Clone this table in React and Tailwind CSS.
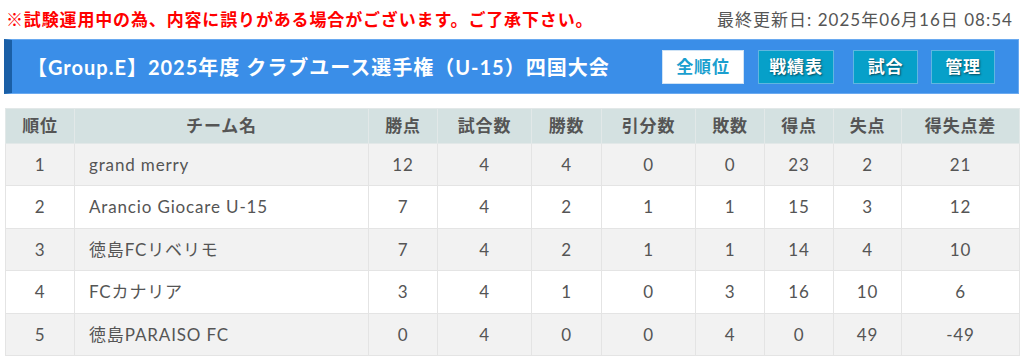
import React from 'react';

// ── Data ──────────────────────────────────────────────────────────────────────

const COLUMNS = [
    { label: '順位', width: 69 },
    { label: 'チーム名', width: 294 },
    { label: '勝点', width: 69 },
    { label: '試合数', width: 94 },
    { label: '勝数', width: 70 },
    { label: '引分数', width: 94 },
    { label: '敗数', width: 69 },
    { label: '得点', width: 69 },
    { label: '失点', width: 68 },
    { label: '得失点差', width: 118 },
];

const ROWS = [
    [1, 'grand merry', 12, 4, 4, 0, 0, 23, 2, 21],
    [2, 'Arancio Giocare U-15', 7, 4, 2, 1, 1, 15, 3, 12],
    [3, '徳島FCリベリモ', 7, 4, 2, 1, 1, 14, 4, 10],
    [4, 'FCカナリア', 3, 4, 1, 0, 3, 16, 10, 6],
    [5, '徳島PARAISO FC', 0, 4, 0, 0, 4, 0, 49, -49],
];

const NAV = [
    { label: '戦績表', cls: 'w-[76px] ml-[14px]' },
    { label: '試合', cls: 'w-[65px] ml-[19px]' },
    { label: '管理', cls: 'w-[64px] ml-[13px]' },
];

const FONT = "font-['Lato','Noto_Sans_CJK_JP',sans-serif]";

// ── Root ──────────────────────────────────────────────────────────────────────

export default function App() {
    return (
        <div className={`${FONT} w-[1024px] h-[364px] bg-white pl-[4px] pr-[5px] overflow-hidden`}>

            {/* Notice + updated date */}
            <div className="flex items-center justify-between h-[39px] pl-[2px] pr-[6px]">
                <p className="text-[17px] font-bold text-[#ff0000] tracking-[0.05em]">
                    ※試験運用中の為、内容に誤りがある場合がございます。ご了承下さい。
                </p>
                <p className="text-[17px] text-[#555] tracking-[0.06em]">
                    最終更新日: 2025年06月16日 08:54
                </p>
            </div>

            {/* Title bar */}
            <div className="flex items-center h-[55px] bg-[#3a8ee8] border border-[#6aaaf0] border-l-[8px] border-l-[#1a5fa6]">
                <h1 className="flex-1 pl-[15px] text-[20px] font-bold text-white tracking-[0.05em]">
                    【Group.E】2025年度 クラブユース選手権（U-15）四国大会
                </h1>
                <div className="flex items-center pr-[23px]">
                    <span className="flex items-center justify-center w-[82px] h-[34px] bg-white border border-[#cfe3f5] text-[17px] font-bold text-[#1a9fcf] tracking-[0.05em]">
                        全順位
                    </span>
                    {NAV.map(n => (
                        <span
                            key={n.label}
                            className={`flex items-center justify-center h-[34px] ${n.cls} bg-[#06a0c9] border border-[#5fb6e0] text-[17px] font-bold text-white tracking-[0.05em] [text-shadow:1px_1px_2px_rgba(0,0,0,0.55)]`}
                        >
                            {n.label}
                        </span>
                    ))}
                </div>
            </div>

            {/* Standings */}
            <table className="mt-[14px] ml-[1px] w-[1014px] table-fixed border-collapse text-[17px] text-[#555] tracking-[0.05em]">
                <colgroup>
                    {COLUMNS.map(c => <col key={c.label} style={{ width: c.width }} />)}
                </colgroup>
                <thead>
                    <tr className="h-[35px] bg-[#d4e1e1]">
                        {COLUMNS.map(c => (
                            <th key={c.label} className="border border-[#e2e8e8] font-bold text-center">
                                {c.label}
                            </th>
                        ))}
                    </tr>
                </thead>
                <tbody>
                    {ROWS.map((r, i) => (
                        <tr key={r[0]} className={`h-[42.4px] ${i % 2 === 0 ? 'bg-[#f2f2f2]' : 'bg-white'}`}>
                            {r.map((v, j) => (
                                <td
                                    key={j}
                                    className={`border border-[#e4e4e4] ${j === 1 ? 'text-left pl-[14px]' : 'text-center'}`}
                                >
                                    {v}
                                </td>
                            ))}
                        </tr>
                    ))}
                </tbody>
            </table>
        </div>
    );
}
